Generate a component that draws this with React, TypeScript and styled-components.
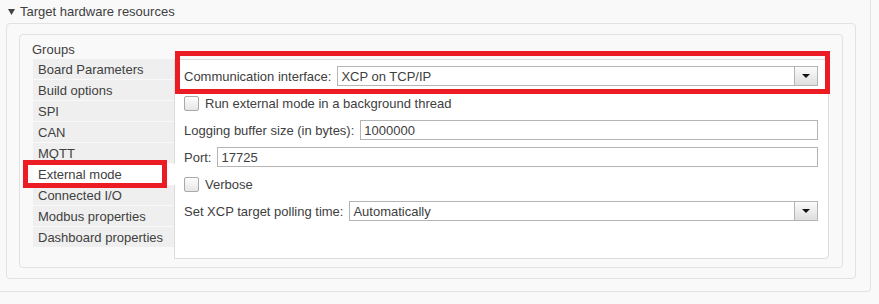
import React from "react";
import styled, { createGlobalStyle, css } from "styled-components";

const GlobalStyle = createGlobalStyle`
  html, body { margin: 0; padding: 0; background: #f9f9f9; }
  body {
    font-family: "Liberation Sans", Arial, sans-serif;
    font-size: 13px;
    color: #404040;
  }
  * { box-sizing: border-box; }
`;

const Page = styled.div`
  width: 879px;
  height: 304px;
  overflow: hidden;
  background: #f9f9f9;
`;

const Outer = styled.section`
  width: 871px;
  height: 292px;
  border-right: 1px solid #e2e2e2;
  border-bottom: 1px solid #e2e2e2;
  border-bottom-right-radius: 4px;
  padding: 0 14px 12px 6px;
  display: flex;
  flex-direction: column;
`;

const Header = styled.div`
  height: 23px;
  display: flex;
  align-items: center;
  gap: 5px;
  padding-left: 2px;
  font-size: 13px;
  color: #404040;
`;

const Panel = styled.div`
  flex: 1;
  border: 1px solid #e2e2e2;
  border-radius: 4px;
  padding: 10px 12px 10px 12px;
  display: flex;
  flex-direction: column;
`;

const GroupBox = styled.div`
  flex: 1;
  border: 1px solid #e2e2e2;
  border-radius: 4px;
  padding: 6px 13px 8px 13px;
  display: flex;
  flex-direction: column;
`;

const GroupLabel = styled.div`
  height: 18px;
  line-height: 18px;
  margin-left: -1px;
`;

const Body = styled.div`
  flex: 1;
  display: flex;
  align-items: flex-start;
`;

const List = styled.ul`
  list-style: none;
  margin: 0;
  padding: 0;
  width: 141px;
  display: flex;
  flex-direction: column;
`;

const Item = styled.li<{ $selected?: boolean }>`
  position: relative;
  height: 21px;
  line-height: 19px;
  padding: 1px 0 0 5px;
  white-space: nowrap;
  background: #efefef;
  border-bottom: 1px solid #f9f9f9;
  ${(p) =>
    p.$selected &&
    css`
      background: #ffffff;
      border-bottom-color: #ffffff;
      margin-right: -1px;
      z-index: 2;
    `}
`;

const Highlight = styled.span<{ $t: number; $r: number; $b: number; $l: number }>`
  position: absolute;
  top: ${(p) => p.$t}px;
  right: ${(p) => p.$r}px;
  bottom: ${(p) => p.$b}px;
  left: ${(p) => p.$l}px;
  border: 5px solid #ec1c24;
  pointer-events: none;
  z-index: 5;
`;

const Content = styled.div`
  flex: 1;
  align-self: stretch;
  height: 200px;
  background: #fff;
  border: 1px solid #dcdcdc;
  border-radius: 0 4px 4px 0;
  padding: 6px 10px 0 9px;
  display: flex;
  flex-direction: column;
  gap: 7px;
`;

const Row = styled.div`
  position: relative;
  height: 20px;
  display: flex;
  align-items: center;
  white-space: nowrap;
`;

const Label = styled.span`
  margin-right: 6px;
`;

const Field = styled.div`
  flex: 1;
  height: 20px;
  border: 1px solid #b4b4b4;
  background: #fff;
  display: flex;
  align-items: center;
  padding-left: 3px;
`;

const SelectText = styled.span`
  flex: 1;
`;

const DropButton = styled.span`
  width: 23px;
  height: 18px;
  border-left: 1px solid #b4b4b4;
  background: linear-gradient(#fbfbfb, #dedede);
  display: flex;
  align-items: center;
  justify-content: center;
`;

const Check = styled.span`
  width: 15px;
  height: 15px;
  border: 1px solid #a9a9a9;
  border-radius: 2px;
  background: linear-gradient(#fdfdfd, #e6e6e6);
  margin-right: 6px;
  flex: none;
`;

const Caret = ({ w = 7, h = 5, color = "#111" }: { w?: number; h?: number; color?: string }) => (
  <svg width={w} height={h} viewBox={`0 0 ${w} ${h}`} style={{ display: "block" }}>
    <polygon points={`0,0 ${w},0 ${w / 2},${h}`} fill={color} />
  </svg>
);

const Select = ({ value }: { value: string }) => (
  <Field>
    <SelectText>{value}</SelectText>
    <DropButton>
      <Caret w={8} h={4} />
    </DropButton>
  </Field>
);

const groups = [
  "Board Parameters",
  "Build options",
  "SPI",
  "CAN",
  "MQTT",
  "External mode",
  "Connected I/O",
  "Modbus properties",
  "Dashboard properties",
];

export default function App() {
  return (
    <Page>
      <GlobalStyle />
      <Outer>
        <Header>
          <Caret w={7} h={6} color="#444" />
          <span>Target hardware resources</span>
        </Header>
        <Panel>
          <GroupBox>
            <GroupLabel>Groups</GroupLabel>
            <Body>
              <List>
                {groups.map((g) => (
                  <Item key={g} $selected={g === "External mode"}>
                    {g}
                    {g === "External mode" && <Highlight $t={-4} $r={8} $b={-4} $l={-10} />}
                  </Item>
                ))}
              </List>
              <Content>
                <Row>
                  <Label>Communication interface:</Label>
                  <Select value="XCP on TCP/IP" />
                  <Highlight $t={-15} $r={-12} $b={-8} $l={-9} />
                </Row>
                <Row>
                  <Check />
                  <span>Run external mode in a background thread</span>
                </Row>
                <Row>
                  <Label>Logging buffer size (in bytes):</Label>
                  <Field>1000000</Field>
                </Row>
                <Row>
                  <Label>Port:</Label>
                  <Field>17725</Field>
                </Row>
                <Row>
                  <Check />
                  <span>Verbose</span>
                </Row>
                <Row>
                  <Label>Set XCP target polling time:</Label>
                  <Select value="Automatically" />
                </Row>
              </Content>
            </Body>
          </GroupBox>
        </Panel>
      </Outer>
    </Page>
  );
}
